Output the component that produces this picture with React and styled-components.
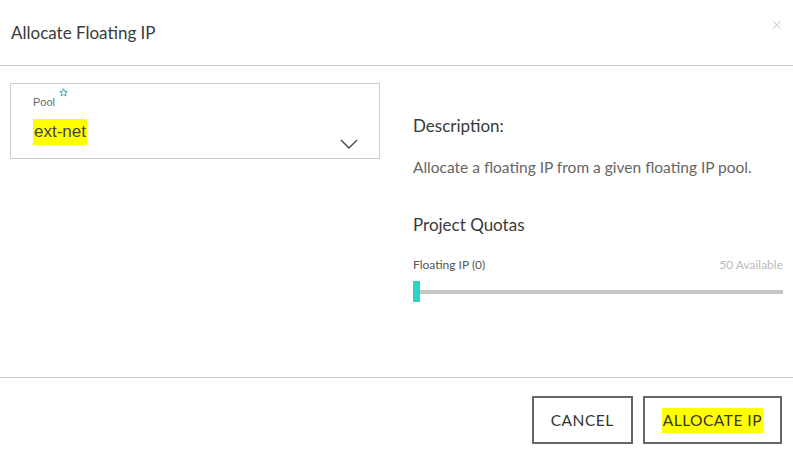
import React from "react";
import styled, { createGlobalStyle } from "styled-components";

const Global = createGlobalStyle`
  html, body { margin: 0; padding: 0; background: #fff; }
  body { font-family: Lato, "Open Sans", sans-serif; color: #333; }
  * { box-sizing: border-box; }
`;

const Modal = styled.div`
  width: 793px;
  height: 457px;
  display: flex;
  flex-direction: column;
  background: #fff;
`;

const Header = styled.div`
  position: relative;
  height: 66px;
  border-bottom: 1px solid #ccc;
  display: flex;
  align-items: center;
  padding: 0 11px 0;
`;

const Title = styled.h4`
  margin: 0;
  font-size: 17px;
  font-weight: 400;
  color: #3a3a3a;
`;

const Close = styled.span`
  position: absolute;
  right: 10px;
  top: 16px;
  font-size: 15px;
  color: #ccc;
  font-family: "DejaVu Sans", sans-serif;
  font-weight: 300;
`;

const Body = styled.div`
  flex: 1;
  display: grid;
  grid-template-columns: 370px 1fr;
  column-gap: 33px;
  padding: 17px 10px 0 10px;
  border-bottom: 1px solid #ccc;
`;

const SelectBox = styled.div`
  position: relative;
  height: 76px;
  border: 1px solid #ccc;
  padding: 9px 22px 0;
`;

const Label = styled.div`
  font-size: 11px;
  color: #666;
  font-family: "Liberation Sans", sans-serif;
  display: flex;
  align-items: flex-start;
  margin-top: 3px;
`;

const Star = styled.svg`
  margin-left: 4px;
  margin-top: -8px;
`;

const Value = styled.div`
  margin-top: 14px;
  font-size: 17px;
  font-family: "Liberation Sans", sans-serif;
  color: #444;
`;

const Mark = styled.span`
  background: #ffff00;
  padding: 3px 1px 4px 1px;
`;

const Chevron = styled.svg`
  position: absolute;
  right: 21px;
  bottom: 9px;
`;

const Side = styled.div`
  display: flex;
  flex-direction: column;
  padding-top: 32px;
`;

const Heading = styled.div`
  font-size: 17px;
  color: #3a3a3a;
`;

const Text = styled.p`
  margin: 22px 0 38px;
  font-size: 15.5px;
  color: #666;
`;

const QuotaRow = styled.div`
  display: flex;
  justify-content: space-between;
  margin-top: 22px;
  font-size: 12px;
`;

const QuotaLabel = styled.span`
  color: #555;
`;

const QuotaAvail = styled.span`
  color: #bbb;
`;

const Track = styled.div`
  position: relative;
  margin-top: 18px;
  height: 4px;
  background: #c4c8c5;
`;

const Thumb = styled.div`
  position: absolute;
  left: 0;
  top: -9px;
  width: 7px;
  height: 21px;
  background: #2ad2c9;
`;

const Footer = styled.div`
  height: 79px;
  display: flex;
  justify-content: flex-end;
  align-items: flex-start;
  gap: 10px;
  padding: 18px 11px 0 0;
`;

const Button = styled.button`
  height: 48px;
  padding: 0 ${(p) => p.$pad}px;
  background: #fff;
  border: 2px solid #666;
  font-family: Lato, "Open Sans", sans-serif;
  font-size: 15.5px;
  letter-spacing: 0.5px;
  color: #333;
  text-transform: uppercase;
`;

export default function App() {
  return (
    <>
      <Global />
      <Modal>
        <Header>
          <Title>Allocate Floating IP</Title>
          <Close>×</Close>
        </Header>
        <Body>
          <div>
            <SelectBox>
              <Label>
                Pool
                <Star width="9" height="9" viewBox="0 0 24 24" fill="none" stroke="#2aa8a0" strokeWidth="2.5">
                  <polygon points="12,2 15,9 22,9.5 16.5,14 18.5,21.5 12,17.5 5.5,21.5 7.5,14 2,9.5 9,9" />
                </Star>
              </Label>
              <Value><Mark>ext-net</Mark></Value>
              <Chevron width="18" height="10" viewBox="0 0 18 10" fill="none" stroke="#444" strokeWidth="1.4">
                <polyline points="1,1 9,9 17,1" />
              </Chevron>
            </SelectBox>
          </div>
          <Side>
            <Heading>Description:</Heading>
            <Text>Allocate a floating IP from a given floating IP pool.</Text>
            <Heading>Project Quotas</Heading>
            <QuotaRow>
              <QuotaLabel>Floating IP (0)</QuotaLabel>
              <QuotaAvail>50 Available</QuotaAvail>
            </QuotaRow>
            <Track><Thumb /></Track>
          </Side>
        </Body>
        <Footer>
          <Button $pad={17}>Cancel</Button>
          <Button $pad={17}><Mark>Allocate IP</Mark></Button>
        </Footer>
      </Modal>
    </>
  );
}
